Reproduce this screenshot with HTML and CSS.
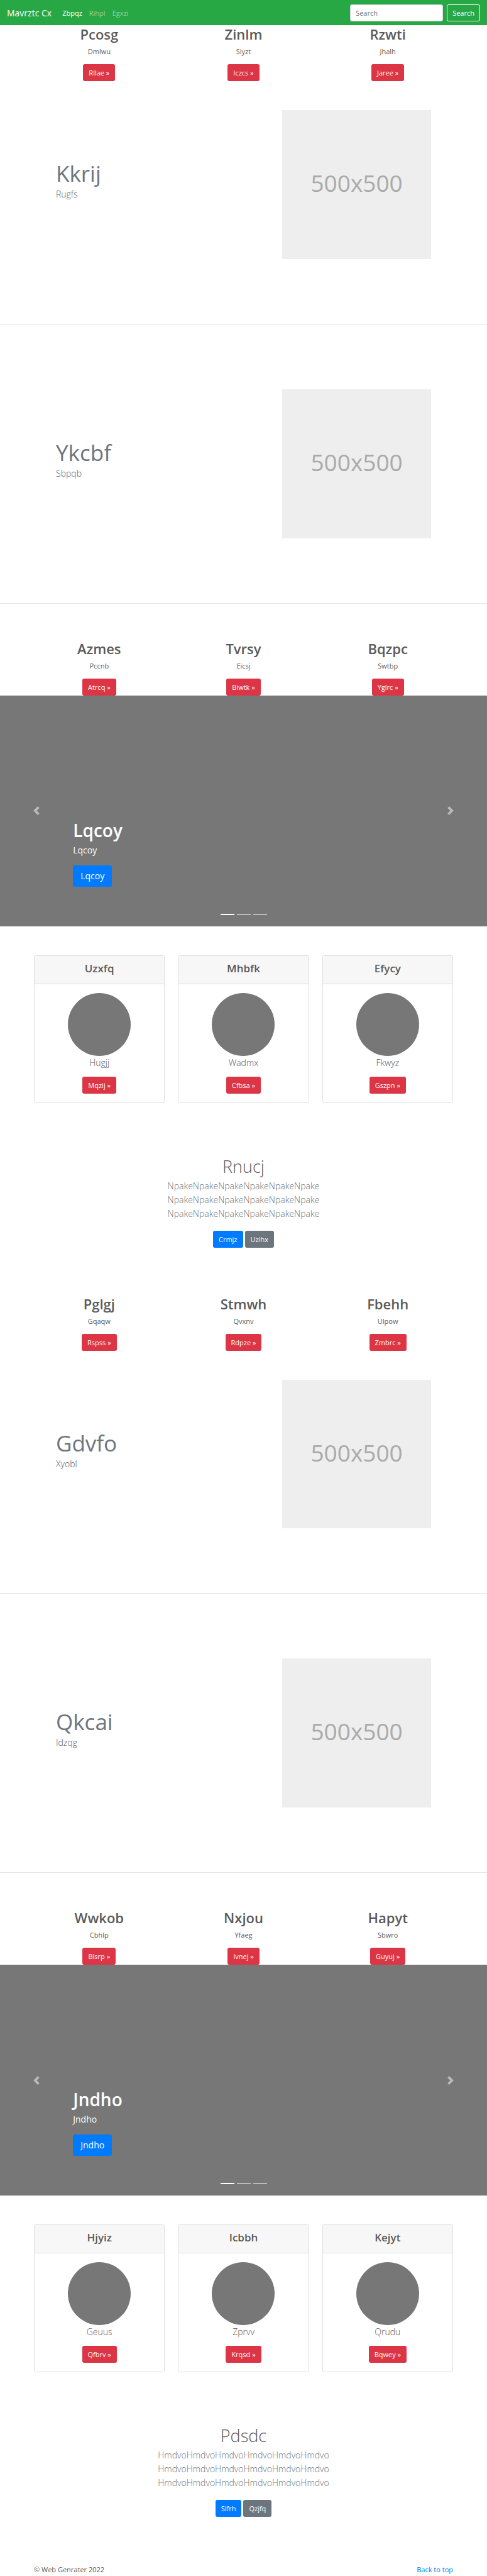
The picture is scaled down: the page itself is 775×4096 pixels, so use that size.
FILE: index.html
```html
<!DOCTYPE html>
<html lang="en">
<head>
<meta charset="utf-8">
<meta name="viewport" content="width=device-width, initial-scale=1">
<title>Mavrztc Cx</title>
<link rel="stylesheet" href="styles.css">
</head>
<body>
<header class="navbar" id="top">
  <a class="brand" href="#">Mavrztc Cx</a>
  <nav class="nav-links">
    <a class="nav-link active" href="#">Zbpqz</a>
    <a class="nav-link" href="#">Rihpl</a>
    <a class="nav-link" href="#">Egxzi</a>
  </nav>
  <form class="search">
    <input class="search-input" type="search" placeholder="Search" aria-label="Search">
    <button class="btn btn-outline" type="button">Search</button>
  </form>
</header>
<main>
  <section class="marketing">
    <div class="blurb"><h2>Pcosg</h2><p>Dmlwu</p><a class="btn btn-danger" href="#">Rllae »</a></div>
    <div class="blurb"><h2>Zinlm</h2><p>Siyzt</p><a class="btn btn-danger" href="#">Iczcs »</a></div>
    <div class="blurb"><h2>Rzwti</h2><p>Jhalh</p><a class="btn btn-danger" href="#">Jaree »</a></div>
  </section>
  <section class="featurette first">
    <div class="featurette-text"><h2>Kkrij</h2><p class="lead">Rugfs</p></div>
    <div class="placeholder">500x500</div>
  </section>
  <hr class="divider">
  <section class="featurette">
    <div class="featurette-text"><h2>Ykcbf</h2><p class="lead">Sbpqb</p></div>
    <div class="placeholder">500x500</div>
  </section>
  <hr class="divider">
  <section class="marketing spaced">
    <div class="blurb"><h2>Azmes</h2><p>Pccnb</p><a class="btn btn-danger" href="#">Atrcq »</a></div>
    <div class="blurb"><h2>Tvrsy</h2><p>Eicsj</p><a class="btn btn-danger" href="#">Biwtk »</a></div>
    <div class="blurb"><h2>Bqzpc</h2><p>Swtbp</p><a class="btn btn-danger" href="#">Yglrc »</a></div>
  </section>
  <section class="carousel">
    <button class="control" type="button" aria-label="Previous"><svg class="chevron" viewBox="0 0 8 8"><path d="M5.25 0l-4 4 4 4 1.5-1.5L4.25 4l2.5-2.5L5.25 0z"/></svg></button>
    <div class="caption"><h1>Lqcoy</h1><p>Lqcoy</p><a class="btn btn-primary btn-lg" href="#">Lqcoy</a></div>
    <button class="control" type="button" aria-label="Next"><svg class="chevron" viewBox="0 0 8 8"><path d="M2.75 0l-1.5 1.5L3.75 4l-2.5 2.5L2.75 8l4-4-4-4z"/></svg></button>
    <div class="indicators">
      <button class="indicator active" type="button" aria-label="Slide 1"></button>
      <button class="indicator" type="button" aria-label="Slide 2"></button>
      <button class="indicator" type="button" aria-label="Slide 3"></button>
    </div>
  </section>
  <section class="cards">
    <article class="card"><h4 class="card-header">Uzxfq</h4><div class="card-body"><div class="avatar"></div><p class="lead">Hugjj</p><a class="btn btn-danger" href="#">Mqzij »</a></div></article>
    <article class="card"><h4 class="card-header">Mhbfk</h4><div class="card-body"><div class="avatar"></div><p class="lead">Wadmx</p><a class="btn btn-danger" href="#">Cfbsa »</a></div></article>
    <article class="card"><h4 class="card-header">Efycy</h4><div class="card-body"><div class="avatar"></div><p class="lead">Fkwyz</p><a class="btn btn-danger" href="#">Gszpn »</a></div></article>
  </section>
  <section class="jumbotron">
    <h1>Rnucj</h1>
    <p class="lead">NpakeNpakeNpakeNpakeNpakeNpake<br>NpakeNpakeNpakeNpakeNpakeNpake<br>NpakeNpakeNpakeNpakeNpakeNpake</p>
    <div class="actions"><a class="btn btn-primary" href="#">Crmjz</a><a class="btn btn-secondary" href="#">Uzihx</a></div>
  </section>

  <section class="marketing">
    <div class="blurb"><h2>Pglgj</h2><p>Gqaqw</p><a class="btn btn-danger" href="#">Rspss »</a></div>
    <div class="blurb"><h2>Stmwh</h2><p>Qvxnv</p><a class="btn btn-danger" href="#">Rdpze »</a></div>
    <div class="blurb"><h2>Fbehh</h2><p>Ulpow</p><a class="btn btn-danger" href="#">Zmbrc »</a></div>
  </section>
  <section class="featurette first">
    <div class="featurette-text"><h2>Gdvfo</h2><p class="lead">Xyobl</p></div>
    <div class="placeholder">500x500</div>
  </section>
  <hr class="divider">
  <section class="featurette">
    <div class="featurette-text"><h2>Qkcai</h2><p class="lead">Idzqg</p></div>
    <div class="placeholder">500x500</div>
  </section>
  <hr class="divider">
  <section class="marketing spaced">
    <div class="blurb"><h2>Wwkob</h2><p>Cbhlp</p><a class="btn btn-danger" href="#">Blsrp »</a></div>
    <div class="blurb"><h2>Nxjou</h2><p>Yfaeg</p><a class="btn btn-danger" href="#">Ivnej »</a></div>
    <div class="blurb"><h2>Hapyt</h2><p>Sbwro</p><a class="btn btn-danger" href="#">Guyuj »</a></div>
  </section>
  <section class="carousel">
    <button class="control" type="button" aria-label="Previous"><svg class="chevron" viewBox="0 0 8 8"><path d="M5.25 0l-4 4 4 4 1.5-1.5L4.25 4l2.5-2.5L5.25 0z"/></svg></button>
    <div class="caption"><h1>Jndho</h1><p>Jndho</p><a class="btn btn-primary btn-lg" href="#">Jndho</a></div>
    <button class="control" type="button" aria-label="Next"><svg class="chevron" viewBox="0 0 8 8"><path d="M2.75 0l-1.5 1.5L3.75 4l-2.5 2.5L2.75 8l4-4-4-4z"/></svg></button>
    <div class="indicators">
      <button class="indicator active" type="button" aria-label="Slide 1"></button>
      <button class="indicator" type="button" aria-label="Slide 2"></button>
      <button class="indicator" type="button" aria-label="Slide 3"></button>
    </div>
  </section>
  <section class="cards">
    <article class="card"><h4 class="card-header">Hjyiz</h4><div class="card-body"><div class="avatar"></div><p class="lead">Geuus</p><a class="btn btn-danger" href="#">Qfbrv »</a></div></article>
    <article class="card"><h4 class="card-header">Icbbh</h4><div class="card-body"><div class="avatar"></div><p class="lead">Zprvv</p><a class="btn btn-danger" href="#">Krqsd »</a></div></article>
    <article class="card"><h4 class="card-header">Kejyt</h4><div class="card-body"><div class="avatar"></div><p class="lead">Qrudu</p><a class="btn btn-danger" href="#">Bqwey »</a></div></article>
  </section>
  <section class="jumbotron">
    <h1>Pdsdc</h1>
    <p class="lead">HmdvoHmdvoHmdvoHmdvoHmdvoHmdvo<br>HmdvoHmdvoHmdvoHmdvoHmdvoHmdvo<br>HmdvoHmdvoHmdvoHmdvoHmdvoHmdvo</p>
    <div class="actions"><a class="btn btn-primary" href="#">Slfrh</a><a class="btn btn-secondary" href="#">Qzjfq</a></div>
  </section>
</main>
<footer class="footer">
  <p>© Web Genrater 2022</p>
  <a href="#top">Back to top</a>
</footer>
</body>
</html>
```
FILE: styles.css
```css
* { box-sizing: border-box; }
body {
  margin: 0;
  font: 400 11px/17px "Open Sans", "Noto Sans", sans-serif;
  color: #5a5a5a;
  background: #fff;
}
h1, h2, h4, p { margin: 0; }
a { color: #007bff; text-decoration: none; }

.btn {
  display: inline-block;
  padding: 4px 8px;
  border: 1px solid transparent;
  border-radius: 3px;
  font: inherit;
  color: #fff;
  text-align: center;
}
.btn-danger { background: #dc3545; }
.btn-primary { background: #007bff; }
.btn-secondary { background: #6c757d; }
.btn-outline { background: transparent; border-color: #f8f9fa; }
.btn-lg { padding: 6px 11px; font-size: 14px; line-height: 20px; }
.lead { font-size: 14px; line-height: 21px; font-weight: 300; }

.navbar {
  display: flex;
  align-items: center;
  height: 40px;
  padding: 0 11px;
  background: #28a745;
}
.brand { font-size: 14px; color: #fff; margin-right: 17px; }
.nav-links { display: flex; gap: 11px; }
.nav-link { color: rgba(255, 255, 255, .5); }
.nav-link.active { color: #fff; }
.search { display: flex; gap: 6px; margin-left: auto; }
.search-input {
  width: 148px;
  height: 27px;
  padding: 4px 8px;
  border: 1px solid #ced4da;
  border-radius: 3px;
  font: inherit;
  color: #495057;
  background: #fff;
}
.search-input::placeholder { color: #6c757d; opacity: 1; }

.marketing {
  display: grid;
  grid-template-columns: repeat(3, 1fr);
  padding: 0 43px;
  text-align: center;
}
.marketing.spaced { margin-top: 57px; }
.blurb { display: flex; flex-direction: column; align-items: center; }
.blurb h2 { font-size: 22px; line-height: 28px; font-weight: 600; margin-bottom: 5px; }
.blurb p { margin-bottom: 12px; }

.featurette {
  display: grid;
  grid-template-columns: 3fr 2fr;
  align-items: center;
  gap: 5px;
  padding: 103px 89px;
}
.featurette.first { padding-top: 46px; }
.featurette-text { padding-bottom: 14px; }
.featurette-text h2 { font-size: 35px; line-height: 44px; font-weight: 400; color: #6c757d; }
.placeholder {
  display: flex;
  align-items: center;
  justify-content: center;
  aspect-ratio: 1;
  padding-bottom: 6px;
  background: #eee;
  color: #aaa;
  font-size: 37px;
}
.divider { height: 1px; margin: 0; border: 0; background: #e5e5e5; }

.carousel {
  display: grid;
  grid-template-columns: 15% 70% 15%;
  position: relative;
  height: 367px;
  background: #777;
  color: #fff;
}
.control { display: flex; align-items: center; justify-content: center; padding: 0; border: 0; background: none; opacity: .5; }
.chevron { width: 14px; height: 14px; fill: #fff; }
.caption { align-self: end; padding-bottom: 63px; }
.caption h1 { font-size: 28px; line-height: 34px; font-weight: 600; margin-bottom: 5px; }
.caption p { font-size: 14px; line-height: 20px; margin-bottom: 14px; }
.caption .btn { display: block; width: fit-content; }
.indicators { position: absolute; left: 0; right: 0; bottom: 18px; display: flex; justify-content: center; gap: 4px; }
.indicator { width: 22px; height: 2px; padding: 0; border: 0; background: #fff; opacity: .5; }
.indicator.active { opacity: 1; }

.cards {
  display: grid;
  grid-template-columns: repeat(3, 1fr);
  gap: 21px;
  padding: 46px 54px 85px;
  text-align: center;
}
.card { border: 1px solid #dfdfdf; border-radius: 3px; overflow: hidden; }
.card-header {
  padding: 9px 14px 14px;
  border-bottom: 1px solid #dfdfdf;
  background: #f7f7f7;
  font-size: 17px;
  line-height: 21px;
  font-weight: 600;
}
.card-body { display: flex; flex-direction: column; align-items: center; padding: 14px; }
.avatar { width: 100px; height: 100px; border-radius: 50%; background: #777; }
.card-body .lead { margin-bottom: 12px; }

.jumbotron { text-align: center; padding-bottom: 75px; }
.jumbotron h1 { font-size: 27px; line-height: 32px; font-weight: 300; margin-bottom: 4px; }
.jumbotron .lead { line-height: 22px; margin-bottom: 16px; color: #6c757d; }
.actions { display: flex; justify-content: center; gap: 3px; }

.footer { display: flex; justify-content: space-between; padding: 0 54px 1px; }
```
